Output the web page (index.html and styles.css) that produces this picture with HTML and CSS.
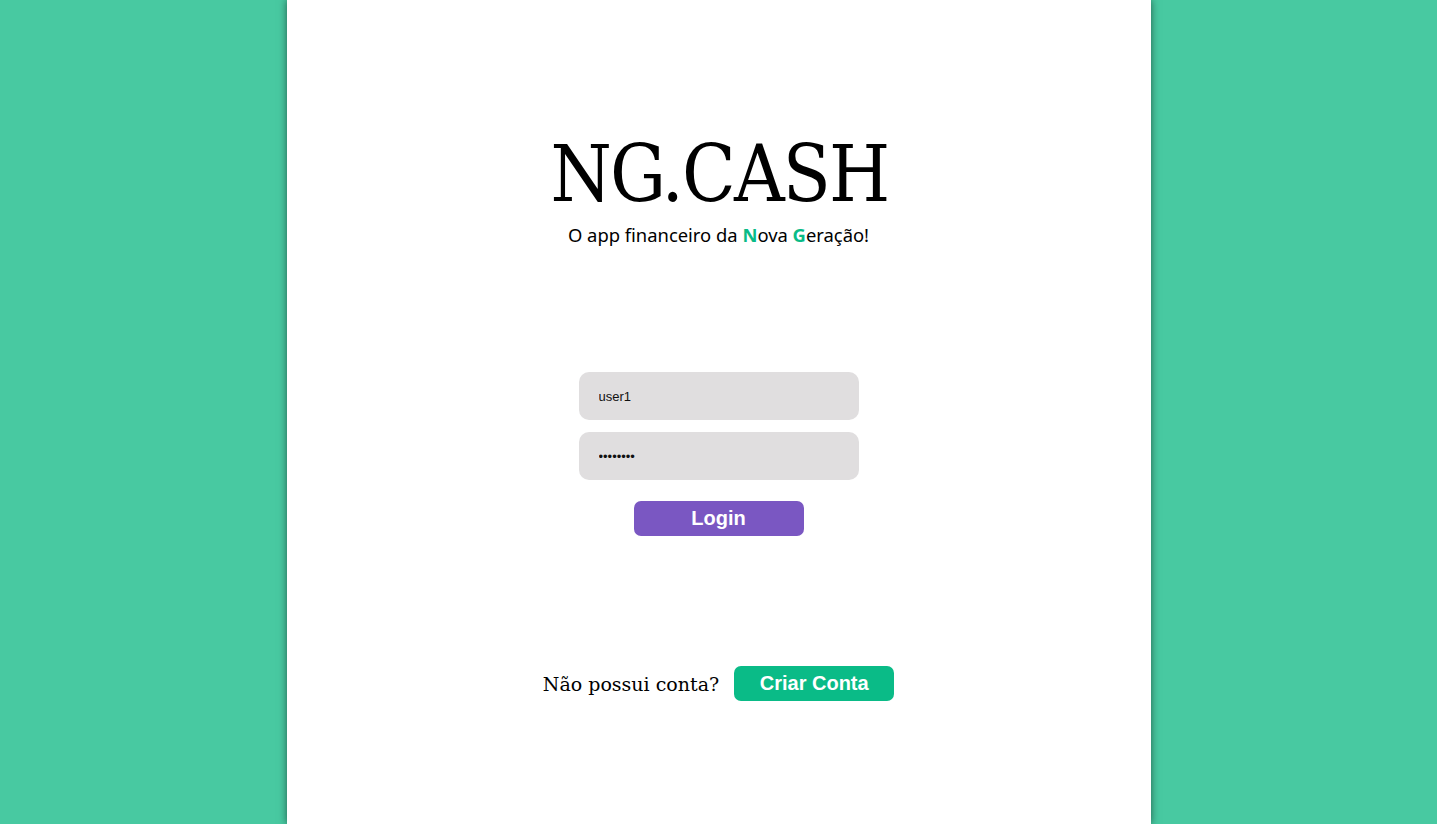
FILE: index.html
```html
<!DOCTYPE html>
<html lang="pt-BR">
<head>
<meta charset="utf-8">
<title>NG.CASH</title>
<link rel="stylesheet" href="styles.css">
</head>
<body>
<main class="card">
  <header class="brand">
    <h1 class="title">NG.CASH</h1>
    <p class="tagline">O app financeiro da <span class="hl">N</span>ova <span class="hl">G</span>eração!</p>
  </header>
  <form class="login">
    <input class="field" type="text" value="user1">
    <input class="field" type="password" value="12345678">
    <button class="btn btn-login" type="button">Login</button>
  </form>
  <div class="signup">
    <span class="signup-text">Não possui conta?</span>
    <button class="btn btn-signup" type="button">Criar Conta</button>
  </div>
</main>
</body>
</html>
```
FILE: styles.css
```css
html, body {
  margin: 0;
  padding: 0;
  height: 100%;
}
body {
  background: #48c9a1;
  display: flex;
  justify-content: center;
  overflow: hidden;
}
.card {
  width: 864px;
  min-height: 100vh;
  background: #ffffff;
  box-shadow: 0 0 8px rgba(0, 0, 0, 0.55);
  display: flex;
  flex-direction: column;
  align-items: center;
}
.brand {
  margin-top: 136px;
  display: flex;
  flex-direction: column;
  align-items: center;
}
.title {
  margin: 0;
  padding-left: 2px;
  font-family: "DejaVu Serif Condensed", "DejaVu Serif", serif;
  font-weight: 400;
  font-size: 78px;
  line-height: 76px;
  letter-spacing: -1.8px;
  color: #000;
}
.tagline {
  margin: 12px 0 0;
  font-family: "Noto Sans", "Open Sans", sans-serif;
  font-size: 18.4px;
  line-height: 22px;
  color: #000;
}
.hl {
  color: #0abb87;
  font-weight: 700;
}
.login {
  margin-top: 126px;
  display: flex;
  flex-direction: column;
  align-items: center;
  gap: 12px;
}
.field {
  box-sizing: border-box;
  width: 280px;
  height: 48px;
  border: none;
  border-radius: 10px;
  background: #e0dedf;
  padding: 0 20px;
  font-family: "Liberation Sans", Arial, sans-serif;
  font-size: 13px;
  color: #111;
  outline: none;
}
.btn {
  border: none;
  border-radius: 7px;
  color: #fff;
  font-family: "Liberation Sans", Arial, sans-serif;
  font-weight: 700;
  font-size: 20px;
  height: 35px;
  padding: 0;
  cursor: pointer;
}
.btn-login {
  margin-top: 9px;
  width: 170px;
  background: #7a57c2;
}
.btn-signup {
  width: 160px;
  background: #0abb87;
}
.signup {
  margin-top: 130px;
  display: flex;
  align-items: center;
  gap: 15px;
}
.signup-text {
  font-family: "DejaVu Serif", "Liberation Serif", serif;
  font-size: 19px;
  color: #000;
}
```
